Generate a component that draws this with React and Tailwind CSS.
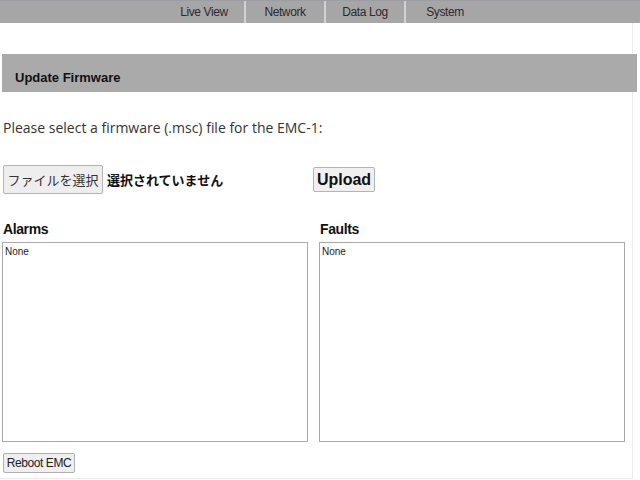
import React from 'react';

const navItems = ['Live View', 'Network', 'Data Log', 'System'];

const App = () => {
  return (
    <div className="w-[640px] h-[480px] bg-white overflow-hidden" style={{ fontFamily: '"Liberation Sans", Arial, sans-serif' }}>
      {/* Top navigation */}
      <div className="h-[23px] bg-[#a6a6a6] border-t border-[#9a9ea3] flex justify-center pl-[8px]">
        {navItems.map((item, i) => (
          <div
            key={item}
            className={`w-[80px] h-full flex items-center justify-center text-[12px] text-[#2a2a2a] ${i > 0 ? 'border-l-2 border-[#d2d2d2]' : ''}`}
          >
            <span className="tracking-[-0.4px]">{item}</span>
          </div>
        ))}
      </div>

      {/* Page body */}
      <div className="w-[633px] h-[456px] border-r border-b border-[#ececec] pt-[31px]">
        <div className="ml-[2px] w-[635px] h-[38px] bg-[#aaaaaa] pl-[13px] pt-[16px]">
          <h2 className="text-[13px] font-bold text-[#111] leading-[16px]">Update Firmware</h2>
        </div>

        <p
          className="mt-[26px] pl-[3px] text-[14px] leading-[20px] text-[#333]"
          style={{ fontFamily: '"Open Sans", "Noto Sans", sans-serif' }}
        >
          Please select a firmware (.msc) file for the EMC-1:
        </p>

        <div className="mt-[27px] pl-[3px] flex items-center h-[29px]">
          <button
            className="h-[29px] w-[100px] border border-[#b4b4b4] bg-[#eeeeee] rounded-[2px] text-[13px] text-[#333] flex items-center justify-center whitespace-nowrap"
            style={{ fontFamily: '"Noto Sans CJK JP", sans-serif' }}
          >
            ファイルを選択
          </button>
          <span
            className="ml-[4px] text-[13px] font-bold text-[#111] w-[206px] whitespace-nowrap"
            style={{ fontFamily: '"Noto Sans CJK JP", sans-serif' }}
          >
            選択されていません
          </span>
          <button className="h-[25px] w-[62px] border border-[#b4b4b4] bg-[#f0f0f0] rounded-[2px] text-[16px] font-bold text-[#111] flex items-center justify-center">
            Upload
          </button>
        </div>

        <div className="mt-[27px] flex gap-[11px] pl-[2px]">
          <div className="flex flex-col">
            <span className="pl-[1px] text-[14px] font-bold text-[#111] leading-[16px] tracking-[-0.4px]">Alarms</span>
            <div className="mt-[5px] w-[306px] h-[200px] border border-[#a8a8a8] px-[2px] py-[2px] text-[10px] leading-[14px] text-[#222]">
              None
            </div>
          </div>
          <div className="flex flex-col">
            <span className="pl-[1px] text-[14px] font-bold text-[#111] leading-[16px] tracking-[-0.4px]">Faults</span>
            <div className="mt-[5px] w-[306px] h-[200px] border border-[#a8a8a8] px-[2px] py-[2px] text-[10px] leading-[14px] text-[#222]">
              None
            </div>
          </div>
        </div>

        <button className="mt-[11px] ml-[3px] h-[20px] w-[72px] border border-[#b0b0b0] bg-[#efefef] rounded-[2px] text-[12px] text-[#222] flex items-center justify-center tracking-[-0.4px]">
          Reboot EMC
        </button>
      </div>
    </div>
  );
};

export default App;
